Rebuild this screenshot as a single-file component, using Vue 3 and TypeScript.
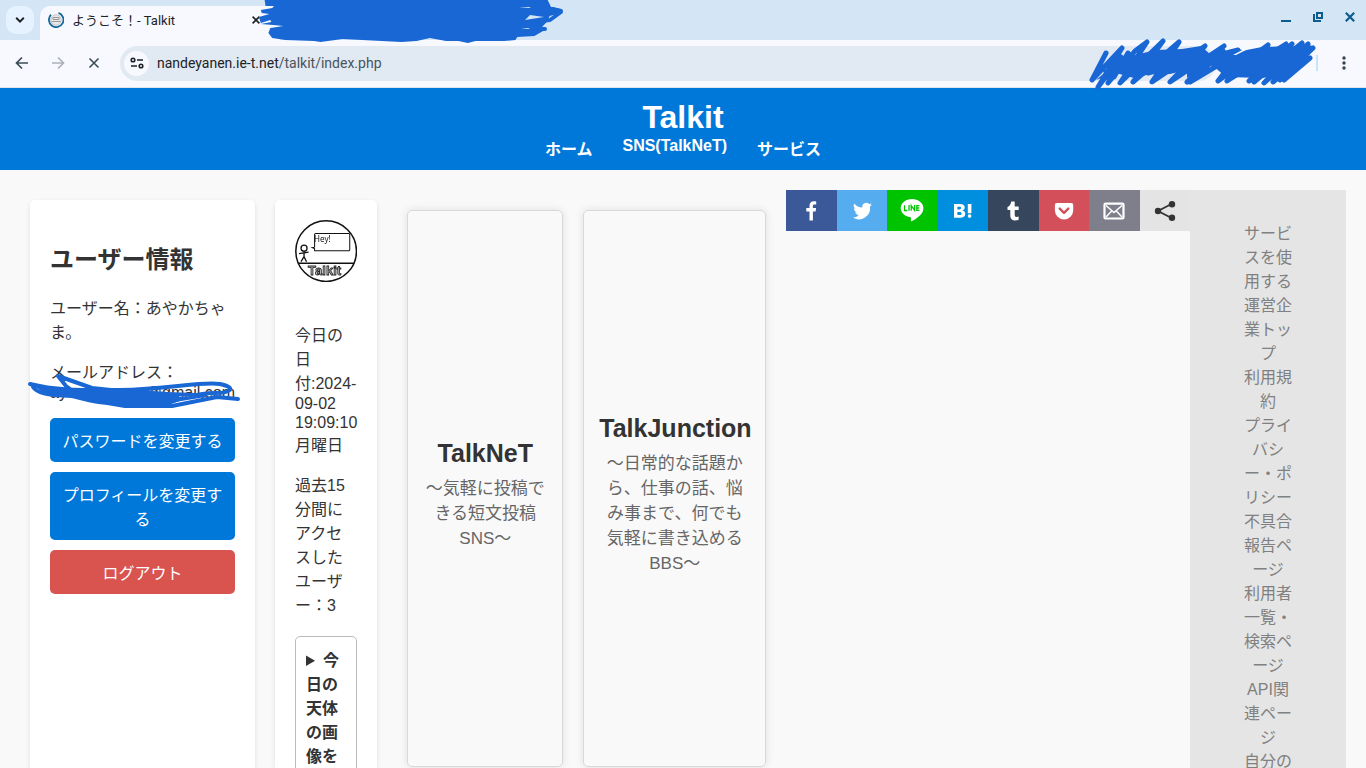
<script setup lang="ts">
interface ShareService {
  id: string
  label: string
}

interface NavItem {
  label: string
  latin: boolean
}

const navItems: NavItem[] = [
  { label: 'ホーム', latin: false },
  { label: 'SNS(TalkNeT)', latin: true },
  { label: 'サービス', latin: false },
]

const shareServices: ShareService[] = [
  { id: 'facebook', label: 'Facebook' },
  { id: 'twitter', label: 'Twitter' },
  { id: 'line', label: 'LINE' },
  { id: 'hatena', label: 'はてなブックマーク' },
  { id: 'tumblr', label: 'Tumblr' },
  { id: 'pocket', label: 'Pocket' },
  { id: 'email', label: 'メール' },
  { id: 'other', label: '共有' },
]

const sideLinks: string[] = [
  'サービスを使用する',
  '運営企業トップ',
  '利用規約',
  'プライバシー・ポリシー',
  '不具合報告ページ',
  '利用者一覧・検索ページ',
  'API関連ページ',
  '自分の',
]
</script>

<template>
  <div class="window">
    <div class="tab-strip">
      <button class="tab-search" type="button" aria-label="タブを検索">
        <svg width="10" height="8" viewBox="0 0 10 8"><path d="M1.2 1.8 5 5.6 8.8 1.8" fill="none" stroke="#1c2226" stroke-width="2" /></svg>
      </button>
      <div class="tab">
        <svg class="favicon" width="16" height="16" viewBox="0 0 16 16">
          <circle cx="8" cy="8" r="5.3" fill="#e8e8e8" stroke="#aaa" stroke-width="0.6" />
          <path d="M5 5.500h6v2H5zM3.500 9.500h9" fill="none" stroke="#999" stroke-width="1" />
          <path d="M10.500.9A7.300 7.300 0 1 1 3 2.700" fill="none" stroke="#16699c" stroke-width="1.800" />
        </svg>
        <span class="tab-title">ようこそ！- Talkit</span>
        <button class="tab-close" type="button" aria-label="タブを閉じる">
          <svg width="8" height="8" viewBox="0 0 8 8"><path d="M.6.6l6.800 6.800M7.400.6.6 7.400" stroke="#1c2226" stroke-width="1.600" /></svg>
        </button>
      </div>
      <div class="window-controls">
        <button type="button" aria-label="最小化">
          <svg width="10" height="12" viewBox="0 0 10 12"><path d="M0 10h10" stroke="#0b5d8e" stroke-width="2" /></svg>
        </button>
        <button type="button" aria-label="元に戻す">
          <svg width="10" height="10" viewBox="0 0 10 10"><path d="M4 1h5v5H4zM1 2v7h7" fill="none" stroke="#0b5d8e" stroke-width="2" /></svg>
        </button>
        <button type="button" aria-label="閉じる">
          <svg width="10" height="10" viewBox="0 0 10 10"><path d="M.8.8l8.400 8.400M9.200.8.8 9.200" stroke="#0b5d8e" stroke-width="2.200" /></svg>
        </button>
      </div>
    </div>

    <div class="toolbar">
      <button class="tool" type="button" aria-label="戻る">
        <svg width="14" height="14" viewBox="0 0 14 14"><path d="M13 7H2M7 1.500 1.500 7 7 12.500" fill="none" stroke="#3c4c55" stroke-width="1.700" /></svg>
      </button>
      <button class="tool" type="button" aria-label="進む" disabled>
        <svg width="14" height="14" viewBox="0 0 14 14"><path d="M1 7h11M7 1.500 12.500 7 7 12.500" fill="none" stroke="#adb1b8" stroke-width="1.700" /></svg>
      </button>
      <button class="tool" type="button" aria-label="読み込みを中止">
        <svg width="12" height="12" viewBox="0 0 12 12"><path d="M1.500 1.500l9 9M10.500 1.500l-9 9" stroke="#3c4c55" stroke-width="1.600" /></svg>
      </button>
      <div class="address">
        <button class="site-info" type="button" aria-label="サイト情報">
          <svg width="14" height="12" viewBox="0 0 14 12" fill="none" stroke="#1c2226" stroke-width="1.600">
            <circle cx="3" cy="3" r="1.800" /><path d="M7 3h6M1 9h6" /><circle cx="11" cy="9" r="1.800" />
          </svg>
        </button>
        <span class="url">nandeyanen.ie-t.net<span class="path">/talkit/index.php</span></span>
      </div>
      <span class="divider"></span>
      <button class="menu" type="button" aria-label="メニュー">
        <svg width="4" height="14" viewBox="0 0 4 14" fill="#34454e"><circle cx="2" cy="2" r="1.700" /><circle cx="2" cy="7" r="1.700" /><circle cx="2" cy="12" r="1.700" /></svg>
      </button>
    </div>

    <svg class="scribble tab-scribble" width="308" height="46" viewBox="0 0 308 46">
      <path d="M8 0 9 6 18 6 16 8 4 10 5 13 13 14 2 17 4 23 14 20 15 22 4 24 17 25 28 26 14 28 12 33 16 38 30 40 60 41 67 42 90 39 152 42 168 41 182 38 199 41 212 41 222 43 230 41 260 41 272 40 274 37 292 36 303 30 300 27 306 21 308 16 316 14 320 9 310 8 306 0Z" transform="scale(.95 1)" fill="#1967d5" />
      <path d="M278 9 296 9 304 11M265 23 293 20 304 12 270 11M266 28 288 29" fill="none" stroke="#1967d5" stroke-width="4" stroke-linecap="round" stroke-linejoin="round" />
      <path d="M268 20 273 15 287 17ZM262 7h12l-2 1ZM264 28h9l-2 1Z" fill="#d4e5f6" />
    </svg>
    <svg class="scribble bar-scribble" width="232" height="52" viewBox="0 0 232 52">
      <path d="M6 42 20 15 6 42 36 10 12 49 35 19 22 45 49 13 61 4 34 45 77 3 47 44 93 4 66 44 119 8 84 44 138 8 101 44 137 13 104 44 154 14 132 43 182 7 141 43 200 6 163 43 206 6 168 44 216 5 178 45 222 6 187 44 227 10 194 42 224 20 198 42M42 15 28 39M62 35 152 12M120 26 225 10M20 34 78 17 180 24 218 13M99 28 150 17M140 38 212 18" fill="none" stroke="#1967d5" stroke-width="5" stroke-linecap="round" stroke-linejoin="round" />
      <path d="M10 42 36 20 70 12 96 11 115 8 125 17 145 15 176 9 206 8 223 12 222 19 198 36 177 40 140 39 126 27 101 40 101 32 84 36 65 36 48 40 30 35Z" fill="#1967d5" />
      <path d="M147 17 160 10 162 11 150 17Z" fill="#f8f9ff" />
    </svg>

    <header class="site-header">
      <h1>Talkit</h1>
      <nav>
        <a v-for="item in navItems" :key="item.label" href="#" :class="{ latin: item.latin }">{{ item.label }}</a>
      </nav>
    </header>

    <main class="content">
      <section class="card user-card">
        <h2>ユーザー情報</h2>
        <p>ユーザー名：あやかちゃま。</p>
        <div class="mail-row">
          <p>メールアドレス：<span class="mail latin"><span>ay</span><span>@gmail.com</span></span></p>
          <svg class="mail-scribble" width="214" height="40" viewBox="0 0 214 40">
            <path d="M3 11C30 18 60 17 92 17 140 17 173 8 193 11 211 15 203 20 188 20 158 20 156 31 111 31 75 31 68 29 45 23 18 22 10 20 6 14M31 3 39 13 57 26 98 33 145 33 190 24 211 26M31 3 65 15 112 20 168 22M80 26 136 29 178 22M43 23 110 23 150 24" fill="none" stroke="#1967d5" stroke-width="4" stroke-linecap="round" stroke-linejoin="round" />
            <path d="M8 14 60 16 112 17 138 19 158 26 139 33 95 33 60 26 20 22Z" fill="#1967d5" />
          </svg>
        </div>
        <button class="action" type="button">パスワードを変更する</button>
        <button class="action" type="button">プロフィールを変更する</button>
        <button class="action logout" type="button">ログアウト</button>
      </section>

      <section class="card info-card">
        <svg class="logo" viewBox="0 0 62 62">
          <circle cx="31" cy="31" r="30.200" fill="#fff" stroke="#111" stroke-width="1.500" />
          <path d="M3 43h56" stroke="#111" stroke-width="1.600" />
          <g fill="none" stroke="#111" stroke-width="1.300">
            <circle cx="9" cy="28" r="3" /><path d="M9 31v6M4 33.500l5-.8 4.500-.8M9 36.500 6 41.500M9 36.500l2.500 5" />
            <path d="M19.500 27v-12.500q0-1 1-1h33q1 0 1 1v15q0 1-1 1h-34v-2l-2.500-1z" stroke-width="1" />
          </g>
          <text x="19" y="22" class="logo-hey">Hey!</text>
          <text x="13" y="55" class="logo-name">Talkit</text>
        </svg>
        <p>今日の日付:<span class="latin">2024-09-02 19:09:10</span>月曜日</p>
        <p>過去15分間にアクセスしたユーザー：3</p>
        <details>
          <summary>今日の天体の画像を</summary>
        </details>
      </section>

      <div class="services">
        <a class="service" href="#">
          <h3>TalkNeT</h3>
          <p>〜気軽に投稿できる短文投稿SNS〜</p>
        </a>
        <a class="service wide" href="#">
          <h3>TalkJunction</h3>
          <p>〜日常的な話題から、仕事の話、悩み事まで、何でも気軽に書き込めるBBS〜</p>
        </a>
      </div>

      <div class="share-row">
        <a v-for="s in shareServices" :key="s.id" href="#" :class="['share', s.id]" :aria-label="s.label">
          <svg width="24" height="24" viewBox="0 0 24 24" fill="#fff">
            <path v-if="s.id === 'facebook'" d="M9.500 21.500v-9H6.300V9h3.200V6.700c0-3 1.600-4.500 4.300-4.500.9 0 1.700.1 2.400.2v3.200h-1.700c-1.200 0-1.600.6-1.600 1.600V9h3.200l-.5 3.500h-2.700v9z" />
            <path v-else-if="s.id === 'twitter'" d="M22 5.700c-.7.3-1.400.5-2.200.6.8-.5 1.400-1.200 1.700-2.100-.7.4-1.500.7-2.400.9a3.900 3.900 0 0 0-6.700 3.500C9.100 8.500 6.200 6.900 4.300 4.500a3.900 3.900 0 0 0 1.200 5.200c-.6 0-1.200-.2-1.700-.5 0 1.900 1.300 3.500 3.100 3.900-.6.2-1.200.2-1.800.1.500 1.500 1.900 2.600 3.600 2.700A7.900 7.900 0 0 1 3 18.500a11.100 11.100 0 0 0 17-10.900c.8-.5 1.500-1.200 2-1.900z" />
            <template v-else-if="s.id === 'line'">
              <path d="M12 0C5.800 0 .7 4 .7 9.100c0 4.600 4 8.400 9.500 9.100 1.300.2.800 1.500.6 3.200-.1.800.6.900 1.400.5 1.900-.9 6.600-4 8.900-6.700 1.600-1.800 2.300-3.700 2.300-6.100C23.400 4 18.200 0 12 0z" />
              <path d="M4.500 6.300v5.200h2.800M9 6v5.800M11.200 11.800V6.500l3.400 5V6M19.500 6.600h-2.700v4.800h2.700M16.800 9h2.500" fill="none" stroke="#00c300" stroke-width="1.300" />
            </template>
            <path v-else-if="s.id === 'hatena'" fill-rule="evenodd" d="M3 5h6c3.300 0 4.700 1.300 4.700 3.400 0 1.600-.9 2.700-2.600 3 2 .3 3.200 1.400 3.200 3.300 0 2.800-2 4.100-5.200 4.100H3zM6.400 7.700v2.700h1.800c1.300 0 1.900-.5 1.900-1.400S9.600 7.700 8.200 7.700zm0 5.200V16h2c1.500 0 2.200-.5 2.200-1.500 0-1.100-.7-1.600-2.200-1.600zM16.800 5h3.600v9.200h-3.600zm1.800 10.300a1.800 1.800 0 1 1 0 3.600 1.800 1.800 0 0 1 0-3.600z" />
            <path v-else-if="s.id === 'tumblr'" d="M10.200 2.500h3.500v5h4v3.400h-4v4.800c0 1.500.6 2.200 1.900 2.200.7 0 1.400-.2 2-.5v3.400c-.9.500-2 .8-3.400.8-3.200 0-4.900-1.700-4.900-4.800v-5.900H6.500V8.100c2.200-.8 3.300-2.700 3.700-5.600z" />
            <template v-else-if="s.id === 'pocket'">
              <path d="M4.800 4h14.500a1.900 1.900 0 0 1 1.900 1.900v5.400a9.100 9.100 0 0 1-18.300 0V5.900A1.900 1.900 0 0 1 4.800 4z" />
              <path d="M7.700 9.600 12 13.800l4.300-4.200" fill="none" stroke="#d3505a" stroke-width="2.400" stroke-linecap="round" stroke-linejoin="round" />
            </template>
            <g v-else-if="s.id === 'email'" fill="none" stroke="#fff">
              <rect x="2.500" y="4.700" width="19" height="14.800" rx="1" stroke-width="2.200" />
              <path d="M4 6.500l8 7 8-7M4 18l5.700-6M20 18l-5.700-6" stroke-width="1.500" />
            </g>
            <template v-else>
              <path d="M18.500 5 5 12l13.500 7" fill="none" stroke="#333" stroke-width="1.800" />
              <g fill="#333"><circle cx="5" cy="12" r="3.200" /><circle cx="19" cy="5.200" r="3.200" /><circle cx="19" cy="18.800" r="3.200" /></g>
            </template>
          </svg>
        </a>
      </div>

      <aside class="side-links">
        <a v-for="link in sideLinks" :key="link" href="#">{{ link }}</a>
      </aside>
    </main>
  </div>
</template>

<style>
body {
  background: #f9f9f9;
}
</style>

<style scoped>
.window {
  position: relative;
  display: flex;
  flex-direction: column;
  height: 100vh;
  overflow: hidden;
  font-family: "Liberation Sans", "Noto Sans CJK JP", sans-serif;
  font-size: 16px;
  color: #333;
  background: #f9f9f9;
}

button {
  padding: 0;
  border: 0;
  background: none;
  font: inherit;
  cursor: pointer;
}

svg {
  display: block;
}

a {
  color: inherit;
  text-decoration: none;
}

.latin {
  line-height: 19px;
}

.tab-strip {
  display: flex;
  flex: none;
  height: 40px;
  background: #d4e5f6;
}

.tab-search {
  display: flex;
  align-items: center;
  justify-content: center;
  width: 28px;
  height: 28px;
  margin: 6px;
  border-radius: 10px;
  background: #e6f2ff;
}

.tab {
  display: flex;
  align-items: center;
  width: 240px;
  box-sizing: border-box;
  height: 34px;
  margin-top: 6px;
  padding: 0 20px 7px 8px;
  border-radius: 10px 10px 0 0;
  background: #f8f9ff;
  font-family: Roboto, "Noto Sans CJK JP", sans-serif;
  font-size: 13px;
  color: #1c2226;
}

.tab-title {
  flex: 1;
  margin-left: 8px;
  white-space: nowrap;
}

.window-controls {
  display: flex;
  align-items: center;
  gap: 22px;
  margin-left: auto;
  padding: 0 11px 6px 0;
}

.toolbar {
  display: flex;
  flex: none;
  align-items: center;
  height: 46px;
  padding: 0 0 1px 4px;
  border-bottom: 1px solid #dfe3ea;
  border-radius: 0 10px 0 0;
  background: #f8f9ff;
}

.tool {
  display: flex;
  align-items: center;
  justify-content: center;
  width: 36px;
  height: 36px;
}

.address {
  display: flex;
  flex: 1;
  align-items: center;
  height: 35px;
  margin-left: 8px;
  border-radius: 18px;
  background: #e1e9f2;
}

.site-info {
  display: flex;
  align-items: center;
  justify-content: center;
  width: 25px;
  height: 25px;
  margin: 0 8px 0 4px;
  border-radius: 50%;
  background: #f8f9ff;
}

.url {
  font-family: Roboto, sans-serif;
  font-size: 14px;
  color: #1c2226;
}

.path {
  color: #49545b;
}

.divider {
  width: 2px;
  height: 16px;
  margin-left: 100px;
  background: #c6e4fb;
}

.menu {
  padding: 8px 20px 8px 24px;
}

.scribble {
  position: absolute;
  z-index: 2;
}

.tab-scribble {
  top: 0;
  left: 257px;
}

.bar-scribble {
  top: 38px;
  right: 48px;
}

.site-header {
  flex: none;
  padding: 10px 0;
  background: #0078d9;
  color: #fff;
  text-align: center;
}

.site-header h1 {
  margin: 0;
  font-size: 32px;
  line-height: 38px;
}

nav {
  display: flex;
  justify-content: center;
  align-items: flex-start;
  gap: 30px;
  font-weight: bold;
}

.content {
  display: flex;
  flex: 1;
  min-height: 0;
  padding: 20px 20px 0;
}

.card {
  box-sizing: border-box;
  margin: 10px 10px 0;
  padding: 20px;
  border-radius: 5px 5px 0 0;
  background: #fff;
  box-shadow: 0 2px 5px rgba(0, 0, 0, 0.1);
}

.card p {
  margin: 0 0 16px;
}

.user-card {
  flex: 0 0 225px;
}

.user-card h2 {
  margin: 20px 0;
  font-size: 24px;
}

.mail-row {
  position: relative;
}

.mail {
  display: flex;
  justify-content: space-between;
}

.mail-scribble {
  position: absolute;
  top: 14px;
  left: -23px;
}

.action {
  display: block;
  width: 100%;
  margin-bottom: 10px;
  padding: 10px;
  border-radius: 5px;
  background: #0078d9;
  color: #fff;
}

.logout {
  background: #d9534f;
}

.info-card {
  flex: 0 0 102px;
}

.logo {
  width: 100%;
  margin-bottom: 40px;
  will-change: transform;
}

.logo-hey {
  font: 8px "Noto Sans", sans-serif;
  fill: #111;
}

.logo-name {
  font: bold 13px "Liberation Sans", sans-serif;
  fill: #bbb;
  stroke: #222;
  stroke-width: 0.8px;
}

details {
  margin-top: 20px;
  padding: 10px;
  border: 1px solid #bbb;
  border-radius: 5px;
}

summary {
  font-weight: bold;
}

.services {
  display: flex;
  gap: 20px;
  margin: 20px 20px 1px;
}

.service {
  display: flex;
  flex: 0 0 156px;
  flex-direction: column;
  justify-content: center;
  box-sizing: border-box;
  min-width: 0;
  padding: 15px;
  border: 1px solid #d8d8d8;
  border-radius: 5px;
  box-shadow: 0 0 8px rgba(0, 0, 0, 0.1);
  text-align: center;
}

.service.wide {
  flex-basis: 183px;
}

.services {
  flex: 0 0 359px;
}

.service h3 {
  margin: 11px 0 6px;
  font-size: 25px;
}

.service p {
  margin: 0;
  font-size: 17px;
  color: #666;
}

.share-row {
  display: flex;
  flex: 1;
  align-self: flex-start;
}

.share {
  display: flex;
  flex: 1;
  align-items: center;
  justify-content: center;
  height: 41px;
}

.facebook { background: #3b5998; }
.twitter { background: #55acee; }
.line { background: #00c300; }
.hatena { background: #008fde; }
.tumblr { background: #36465d; }
.pocket { background: #d3505a; }
.email { background: #7f7f8b; }
.other { background: #e4e4e4; }

.side-links {
  display: flex;
  flex: 0 0 156px;
  flex-direction: column;
  box-sizing: border-box;
  padding: 30px 52px 0;
  background: #e5e5e5;
  color: #808080;
  text-align: center;
}
</style>
